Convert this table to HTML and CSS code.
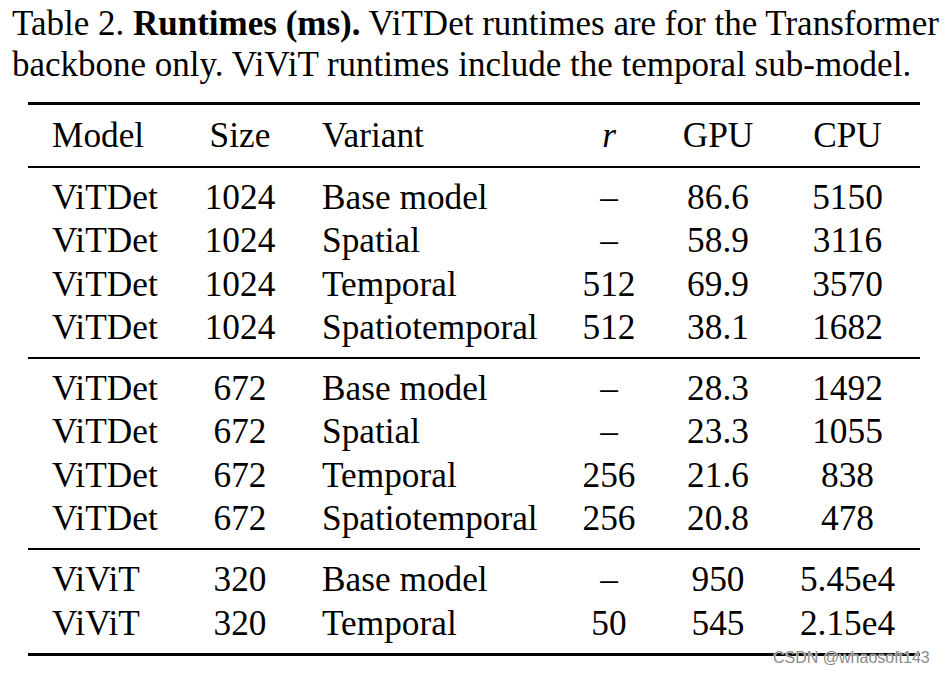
FILE: index.html
```html
<!DOCTYPE html>
<html>
<head>
<meta charset="utf-8">
<link rel="stylesheet" href="styles.css">
</head>
<body>
<div class="page">
  <p class="caption"><span class="line">Table 2. <b>Runtimes (ms).</b> ViTDet runtimes are for the Transformer</span><span class="line">backbone only. ViViT runtimes include the temporal sub-model.</span></p>
  <div class="table">
    <div class="row head">
      <div class="c1">Model</div><div class="c2">Size</div><div class="c3">Variant</div><div class="c4"><i>r</i></div><div class="c5">GPU</div><div class="c6">CPU</div>
    </div>
    <div class="group">
      <div class="row"><div class="c1">ViTDet</div><div class="c2">1024</div><div class="c3">Base model</div><div class="c4">–</div><div class="c5">86.6</div><div class="c6">5150</div></div>
      <div class="row"><div class="c1">ViTDet</div><div class="c2">1024</div><div class="c3">Spatial</div><div class="c4">–</div><div class="c5">58.9</div><div class="c6">3116</div></div>
      <div class="row"><div class="c1">ViTDet</div><div class="c2">1024</div><div class="c3">Temporal</div><div class="c4">512</div><div class="c5">69.9</div><div class="c6">3570</div></div>
      <div class="row"><div class="c1">ViTDet</div><div class="c2">1024</div><div class="c3">Spatiotemporal</div><div class="c4">512</div><div class="c5">38.1</div><div class="c6">1682</div></div>
    </div>
    <div class="group">
      <div class="row"><div class="c1">ViTDet</div><div class="c2">672</div><div class="c3">Base model</div><div class="c4">–</div><div class="c5">28.3</div><div class="c6">1492</div></div>
      <div class="row"><div class="c1">ViTDet</div><div class="c2">672</div><div class="c3">Spatial</div><div class="c4">–</div><div class="c5">23.3</div><div class="c6">1055</div></div>
      <div class="row"><div class="c1">ViTDet</div><div class="c2">672</div><div class="c3">Temporal</div><div class="c4">256</div><div class="c5">21.6</div><div class="c6">838</div></div>
      <div class="row"><div class="c1">ViTDet</div><div class="c2">672</div><div class="c3">Spatiotemporal</div><div class="c4">256</div><div class="c5">20.8</div><div class="c6">478</div></div>
    </div>
    <div class="group last">
      <div class="row"><div class="c1">ViViT</div><div class="c2">320</div><div class="c3">Base model</div><div class="c4">–</div><div class="c5">950</div><div class="c6">5.45e4</div></div>
      <div class="row"><div class="c1">ViViT</div><div class="c2">320</div><div class="c3">Temporal</div><div class="c4">50</div><div class="c5">545</div><div class="c6">2.15e4</div></div>
    </div>
  </div>
  <div class="watermark">CSDN @whaosoft143</div>
</div>
</body>
</html>
```
FILE: styles.css
```css
html, body {
  margin: 0;
  padding: 0;
  background: #fff;
}
.page {
  position: relative;
  width: 946px;
  height: 673px;
  font-family: "Liberation Serif", "Times New Roman", serif;
  color: #000;
}
.caption {
  margin: 0;
  padding: 4px 0 0 12px;
  font-size: 35px;
  line-height: 40.5px;
}
.caption .line {
  display: block;
  white-space: nowrap;
}
.table {
  margin: 17px 0 0 28px;
  width: 892px;
  border-top: 3px solid #000;
  border-bottom: 3px solid #000;
  font-size: 35.3px;
}
.row {
  display: grid;
  grid-template-columns: 153px 118px 258px 104px 114px 145px;
  height: 43.3px;
  line-height: 43.3px;
  white-space: nowrap;
}
.row.head {
  height: 61px;
  line-height: 61px;
}
.group {
  border-top: 2px solid #000;
  padding: 8px 0;
}
.c1 { padding-left: 24px; text-align: left; }
.c2 { text-align: center; }
.c3 { padding-left: 23px; text-align: left; }
.c4 { text-align: center; }
.c5 { text-align: center; }
.c6 { text-align: center; }
.watermark {
  position: absolute;
  left: 773px;
  top: 648px;
  font-family: "Liberation Sans", Arial, sans-serif;
  font-size: 16px;
  line-height: 20px;
  color: #8c8c8c;
  text-shadow: 0 0 1px #fff, 0 0 1px #fff;
  white-space: nowrap;
}
```
